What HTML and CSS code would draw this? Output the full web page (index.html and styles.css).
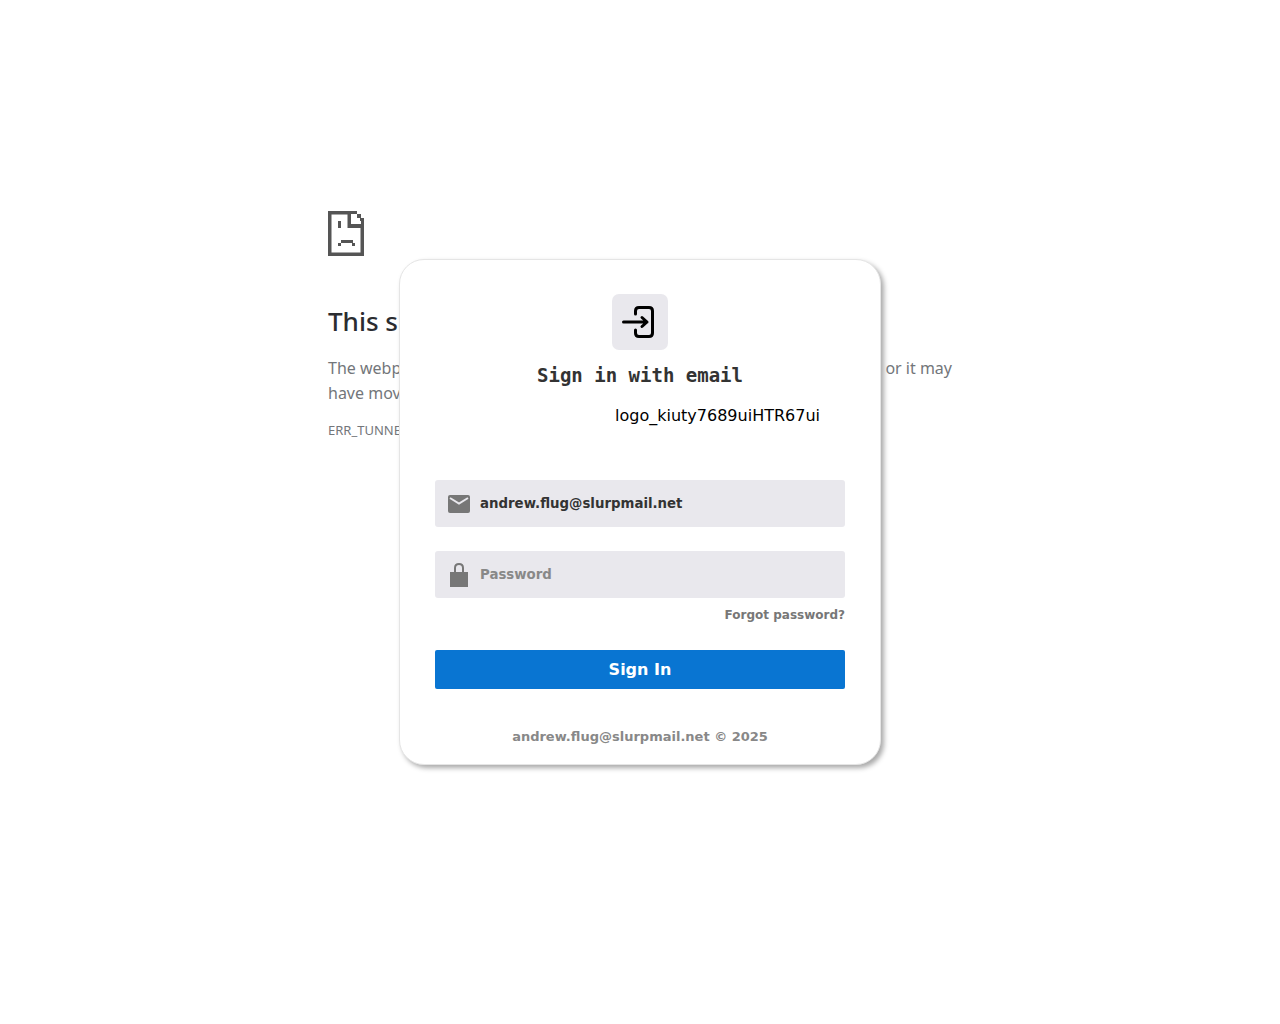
FILE: index.html
```html
<!DOCTYPE html>
<html lang="en">
<head>
<meta charset="utf-8">
<meta name="viewport" content="width=device-width, initial-scale=1">
<title>Sign in</title>
<link rel="stylesheet" href="styles.css">
</head>
<body>
<div class="stage">
  <section class="error">
    <svg class="error-icon" viewBox="0 0 36 45" aria-hidden="true">
      <path fill="#555" fill-rule="evenodd" d="M0 0H29V3H23V13H36V45H0ZM3.500 3.500V41.500H32.500V17H19.500V3.500Z"/>
      <path fill="#555" d="M29 3h4v4h-4zM32 7h4v7h-3v-4h-1zM10 10h3v7h-3zM13 29h12v3h-12zM10 32h3v3h-3zM24 32h3v3h-3z"/>
    </svg>
    <h2 class="error-title">This site</h2>
    <div class="error-text">
      <div class="error-line"><span>The webpage</span><span>or it may</span></div>
      <div>have moved</div>
    </div>
    <p class="error-code">ERR_TUNNEL</p>
  </section>

  <main class="card">
    <div class="badge">
      <svg viewBox="0 0 36 36" width="36" height="36" fill="none" stroke="#000" stroke-width="3" stroke-linecap="round" stroke-linejoin="round" aria-hidden="true">
        <path d="M13.500 10V7Q13.500 3.500 17 3.500H27Q30.500 3.500 30.500 7V29Q30.500 32.500 27 32.500H17Q13.500 32.500 13.500 29V26M1.500 18H25M20 13.500L25 18L20 22.500"/>
      </svg>
    </div>
    <h1 class="title">Sign in with email</h1>
    <p class="logo-name">logo_kiuty7689uiHTR67ui</p>
    <form class="form">
      <div class="field">
        <svg class="field-icon" viewBox="0 0 24 26" aria-hidden="true">
          <rect x="1" y="4" width="22" height="18" rx="2" fill="#777"/>
          <path d="M3 7L12 12.500L21 7" fill="none" stroke="#e9e8ed" stroke-width="2"/>
        </svg>
        <input class="input" type="email" aria-label="Email" value="andrew.flug@slurpmail.net">
      </div>
      <div class="field">
        <svg class="field-icon" viewBox="0 0 24 26" aria-hidden="true">
          <path d="M3 10H21V25H3Z" fill="#777"/>
          <path d="M8 11V6Q8 2 12 2T16 6V11" fill="none" stroke="#777" stroke-width="2"/>
        </svg>
        <input class="input" type="password" aria-label="Password" placeholder="Password">
      </div>
      <a class="forgot" href="#">Forgot password?</a>
      <button class="submit" type="submit">Sign In</button>
    </form>
    <footer class="footer">andrew.flug@slurpmail.net © 2025</footer>
  </main>
</div>
</body>
</html>
```

FILE: styles.css
```css
* {
  box-sizing: border-box;
}

body {
  margin: 0;
  background: #fff;
  color: #000;
  font-family: "DejaVu Sans", sans-serif;
}

h1,
h2,
p {
  margin: 0;
}

.stage {
  display: grid;
  min-height: 100vh;
}

.error,
.card {
  grid-area: 1 / 1;
  justify-self: center;
}

.error {
  width: 100%;
  max-width: 624px;
  padding-top: 211px;
  color: #73767a;
  font-family: "Noto Sans", sans-serif;
}

.error-icon {
  display: block;
  width: 36px;
  height: 45px;
}

.error-title {
  margin-top: 48px;
  color: #2b2c30;
  font-size: 26px;
  font-weight: 500;
  line-height: 34px;
}

.error-text {
  margin-top: 18px;
  font-size: 16px;
  line-height: 25px;
}

.error-line {
  display: flex;
  justify-content: space-between;
}

.error-code {
  margin-top: 14px;
  font-size: 13px;
  line-height: 20px;
}

.card {
  display: flex;
  flex-direction: column;
  align-items: center;
  align-self: center;
  width: 100%;
  max-width: 482px;
  padding: 34px 35px 18px;
  border: 1px solid #e5e5e5;
  border-radius: 25px;
  background: #fff;
  box-shadow: 3px 3px 5px #aaa;
}

.badge {
  display: grid;
  place-items: center;
  width: 56px;
  height: 56px;
  border-radius: 7px;
  background: #e9e8ed;
}

.title {
  margin-top: 13px;
  color: #333;
  font-family: "DejaVu Sans Mono", monospace;
  font-size: 19px;
  line-height: 24px;
}

.logo-name {
  align-self: flex-end;
  margin-top: 19px;
  padding-right: 25px;
  font-size: 16px;
  line-height: 20px;
}

.form {
  display: flex;
  flex-direction: column;
  width: 100%;
  margin-top: 54px;
}

.field {
  display: flex;
  align-items: center;
  gap: 9px;
  height: 47px;
  padding: 0 12px;
  border-radius: 3px;
  background: #e9e8ed;
}

.field + .field {
  margin-top: 24px;
}

.field-icon {
  flex: none;
  width: 24px;
  height: 26px;
}

.input {
  flex: 1;
  min-width: 0;
  padding: 0;
  border: 0;
  outline: 0;
  background: transparent;
  color: #333;
  font-family: inherit;
  font-size: smaller;
  font-weight: 700;
  line-height: 20px;
}

.input::placeholder {
  color: #888;
}

.forgot {
  align-self: flex-end;
  margin-top: 8px;
  color: #777;
  font-size: 12px;
  font-weight: 700;
  line-height: 18px;
  text-decoration: none;
}

.submit {
  height: 39px;
  margin-top: 26px;
  padding: 0;
  border: 0;
  border-radius: 2px;
  background: #0975d2;
  color: #fff;
  font-family: inherit;
  font-size: 16px;
  font-weight: 700;
}

.footer {
  margin-top: 39px;
  color: #888;
  font-size: 13px;
  font-weight: 700;
  line-height: 18px;
}
```
